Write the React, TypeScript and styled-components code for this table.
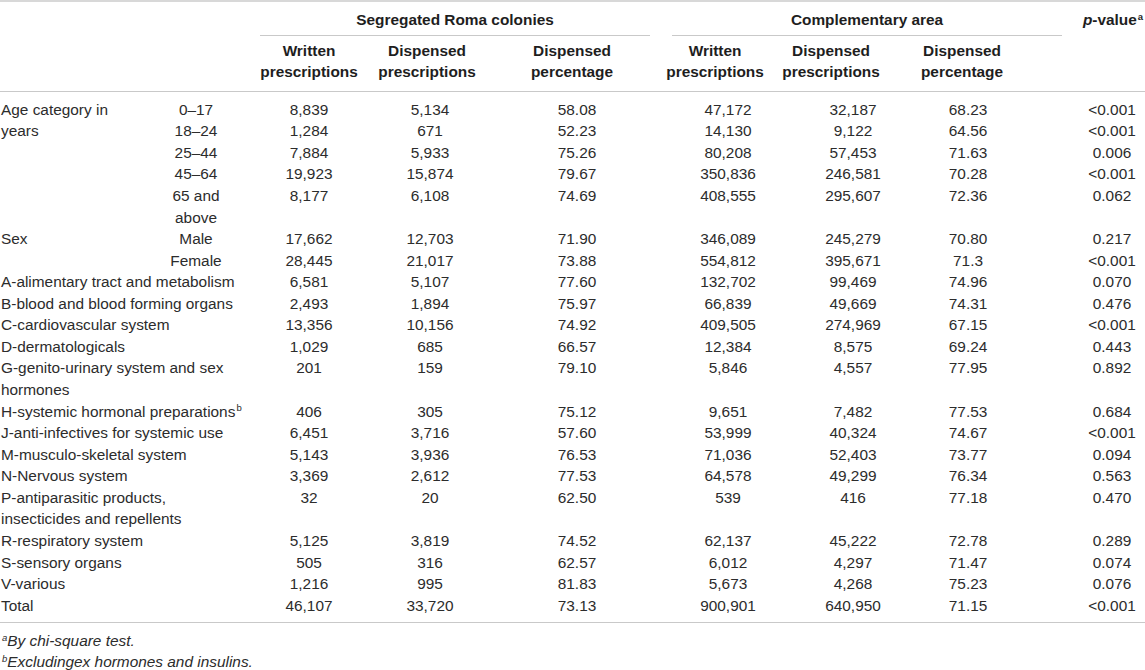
import React from 'react';
import styled, { createGlobalStyle } from 'styled-components';

const GlobalStyle = createGlobalStyle`
  body {
    margin: 0;
    background: #fff;
    overflow: hidden;
  }
`;

type Column = { x: number; w: number; head: number; data: number };

// x, width, and the centre of header / data text for each numeric column
const COLUMNS: Column[] = [
  { x: 242, w: 132, head: 309, data: 309 },
  { x: 374, w: 110, head: 427, data: 430 },
  { x: 484, w: 176, head: 572, data: 577 },
  { x: 660, w: 118, head: 715, data: 728 },
  { x: 778, w: 122, head: 831, data: 853 },
  { x: 900, w: 162, head: 962, data: 968 },
  { x: 1062, w: 83, head: 1113, data: 1112 },
];

const offset = (c: Column, center: number) => {
  const s = 2 * center - 2 * c.x - c.w;
  return { pl: Math.max(0, s), pr: Math.max(0, -s) };
};

const Table = styled.table`
  width: 1145px;
  border-collapse: collapse;
  table-layout: fixed;
  border-top: 2px solid #d8d8d8;
  font-family: "Liberation Sans", Arial, sans-serif;
  font-size: 15.4px;
  line-height: 21.57px;
  color: #2c2c2c;

  & thead {
    border-bottom: 1px solid #c9c9c9;
  }
  & tbody tr:first-child td {
    padding-top: 7px;
  }
  & tbody tr:last-child td {
    padding-bottom: 6px;
  }
  & tfoot {
    border-top: 1px solid #c9c9c9;
  }
`;

const Col = styled.col<{ $w: number }>`
  width: ${({ $w }) => $w}px;
`;

const Blank = styled.th`
  padding: 0;
`;

const GroupHead = styled.th`
  padding: 7px 0 0;
  font-weight: 700;
  color: #1e1e1e;
  vertical-align: top;
`;

const GroupLabel = styled.div<{ $ml: number; $mr: number }>`
  margin: 0 ${({ $mr }) => $mr}px 0 ${({ $ml }) => $ml}px;
  padding-bottom: 4px;
  border-bottom: 1px solid #c9c9c9;
  text-align: center;
`;

const PHead = styled.th<{ $pl: number; $pr: number }>`
  padding: 7px ${({ $pr }) => $pr}px 0 ${({ $pl }) => $pl}px;
  font-weight: 700;
  color: #1e1e1e;
  text-align: center;
  vertical-align: top;
  white-space: nowrap;

  & i {
    font-style: italic;
  }
`;

const SubHead = styled.th<{ $pl: number; $pr: number }>`
  padding: 4px ${({ $pr }) => $pr}px 8px ${({ $pl }) => $pl}px;
  font-weight: 700;
  color: #1e1e1e;
  text-align: center;
  vertical-align: top;
`;

const Sup = styled.sup`
  font-size: 0.62em;
  line-height: 0;
  vertical-align: 0.55em;
  margin-left: 1px;
`;

const Label = styled.td`
  padding: 0 0 0 1px;
  text-align: left;
  vertical-align: top;
`;

const SubLabel = styled.td`
  padding: 0;
  text-align: center;
  vertical-align: top;
`;

const Num = styled.td<{ $pl: number; $pr: number }>`
  padding: 0 ${({ $pr }) => $pr}px 0 ${({ $pl }) => $pl}px;
  text-align: center;
  vertical-align: top;
  white-space: nowrap;
`;

const Note = styled.td`
  padding: 7px 0 0 1px;
  font-style: italic;
  line-height: 21px;
  color: #2c2c2c;
`;

type Row = { label?: React.ReactNode; span?: number; sub?: React.ReactNode; v: string[] };

const rows: Row[] = [
  { label: <>Age category in<br />years</>, span: 5, sub: '0–17', v: ['8,839', '5,134', '58.08', '47,172', '32,187', '68.23', '<0.001'] },
  { sub: '18–24', v: ['1,284', '671', '52.23', '14,130', '9,122', '64.56', '<0.001'] },
  { sub: '25–44', v: ['7,884', '5,933', '75.26', '80,208', '57,453', '71.63', '0.006'] },
  { sub: '45–64', v: ['19,923', '15,874', '79.67', '350,836', '246,581', '70.28', '<0.001'] },
  { sub: <>65 and<br />above</>, v: ['8,177', '6,108', '74.69', '408,555', '295,607', '72.36', '0.062'] },
  { label: 'Sex', span: 2, sub: 'Male', v: ['17,662', '12,703', '71.90', '346,089', '245,279', '70.80', '0.217'] },
  { sub: 'Female', v: ['28,445', '21,017', '73.88', '554,812', '395,671', '71.3', '<0.001'] },
  { label: 'A-alimentary tract and metabolism', v: ['6,581', '5,107', '77.60', '132,702', '99,469', '74.96', '0.070'] },
  { label: 'B-blood and blood forming organs', v: ['2,493', '1,894', '75.97', '66,839', '49,669', '74.31', '0.476'] },
  { label: 'C-cardiovascular system', v: ['13,356', '10,156', '74.92', '409,505', '274,969', '67.15', '<0.001'] },
  { label: 'D-dermatologicals', v: ['1,029', '685', '66.57', '12,384', '8,575', '69.24', '0.443'] },
  { label: <>G-genito-urinary system and sex<br />hormones</>, v: ['201', '159', '79.10', '5,846', '4,557', '77.95', '0.892'] },
  { label: <>H-systemic hormonal preparations<Sup>b</Sup></>, v: ['406', '305', '75.12', '9,651', '7,482', '77.53', '0.684'] },
  { label: 'J-anti-infectives for systemic use', v: ['6,451', '3,716', '57.60', '53,999', '40,324', '74.67', '<0.001'] },
  { label: 'M-musculo-skeletal system', v: ['5,143', '3,936', '76.53', '71,036', '52,403', '73.77', '0.094'] },
  { label: 'N-Nervous system', v: ['3,369', '2,612', '77.53', '64,578', '49,299', '76.34', '0.563'] },
  { label: <>P-antiparasitic products,<br />insecticides and repellents</>, v: ['32', '20', '62.50', '539', '416', '77.18', '0.470'] },
  { label: 'R-respiratory system', v: ['5,125', '3,819', '74.52', '62,137', '45,222', '72.78', '0.289'] },
  { label: 'S-sensory organs', v: ['505', '316', '62.57', '6,012', '4,297', '71.47', '0.074'] },
  { label: 'V-various', v: ['1,216', '995', '81.83', '5,673', '4,268', '75.23', '0.076'] },
  { label: 'Total', v: ['46,107', '33,720', '73.13', '900,901', '640,950', '71.15', '<0.001'] },
];

const subHeads = [
  ['Written', 'prescriptions'],
  ['Dispensed', 'prescriptions'],
  ['Dispensed', 'percentage'],
  ['Written', 'prescriptions'],
  ['Dispensed', 'prescriptions'],
  ['Dispensed', 'percentage'],
];

export default function App() {
  const pHead = offset(COLUMNS[6], COLUMNS[6].head);

  return (
    <>
      <GlobalStyle />
      <Table>
        <colgroup>
          <Col $w={150} />
          <Col $w={92} />
          {COLUMNS.map((c) => <Col key={c.x} $w={c.w} />)}
        </colgroup>
        <thead>
          <tr>
            <Blank colSpan={2} rowSpan={2} />
            <GroupHead colSpan={3}>
              <GroupLabel $ml={18} $mr={10}>Segregated Roma colonies</GroupLabel>
            </GroupHead>
            <GroupHead colSpan={3}>
              <GroupLabel $ml={12} $mr={0}>Complementary area</GroupLabel>
            </GroupHead>
            <PHead rowSpan={2} $pl={pHead.pl} $pr={pHead.pr}>
              <i>p</i>-value<Sup>a</Sup>
            </PHead>
          </tr>
          <tr>
            {subHeads.map(([a, b], i) => {
              const o = offset(COLUMNS[i], COLUMNS[i].head);
              return (
                <SubHead key={i} $pl={o.pl} $pr={o.pr}>
                  {a}<br />{b}
                </SubHead>
              );
            })}
          </tr>
        </thead>
        <tbody>
          {rows.map((r, i) => (
            <tr key={i}>
              {r.sub === undefined ? (
                <Label colSpan={2}>{r.label}</Label>
              ) : (
                <>
                  {r.label !== undefined && <Label rowSpan={r.span}>{r.label}</Label>}
                  <SubLabel>{r.sub}</SubLabel>
                </>
              )}
              {r.v.map((val, j) => {
                const o = offset(COLUMNS[j], COLUMNS[j].data);
                return <Num key={j} $pl={o.pl} $pr={o.pr}>{val}</Num>;
              })}
            </tr>
          ))}
        </tbody>
        <tfoot>
          <tr>
            <Note colSpan={9}>
              <Sup>a</Sup>By chi-square test.
              <br />
              <Sup>b</Sup>Excludingex hormones and insulins.
            </Note>
          </tr>
        </tfoot>
      </Table>
    </>
  );
}
